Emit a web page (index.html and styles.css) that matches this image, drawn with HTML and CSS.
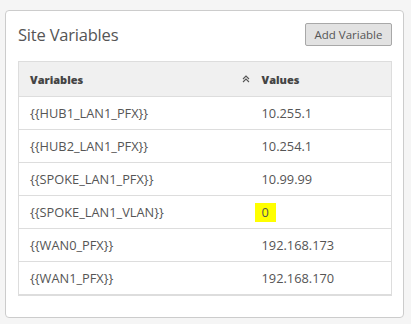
FILE: index.html
```html
<!DOCTYPE html>
<html lang="en">
  <head>
    <meta charset="UTF-8" />
    <title>Site Variables</title>
    <link rel="stylesheet" href="styles.css">
  </head>
  <body>
    <main class="card">
      <header class="card-head">
        <h2 class="card-title">Site Variables</h2>
        <button class="btn" type="button">Add Variable</button>
      </header>

      <table class="vars">
        <thead>
          <tr>
            <th class="col-name">
              <div class="th-inner">
                <span>Variables</span>
                <svg class="sort" width="8" height="8" viewBox="0 0 8 8">
                  <path d="M1 4 L4 1 L7 4 M1 7 L4 4 L7 7" fill="none" stroke="#555" stroke-width="1.1" />
                </svg>
              </div>
            </th>
            <th>Values</th>
          </tr>
        </thead>
        <tbody>
          <tr><td>{{HUB1_LAN1_PFX}}</td><td>10.255.1</td></tr>
          <tr><td>{{HUB2_LAN1_PFX}}</td><td>10.254.1</td></tr>
          <tr><td>{{SPOKE_LAN1_PFX}}</td><td>10.99.99</td></tr>
          <tr><td>{{SPOKE_LAN1_VLAN}}</td><td><span class="mark">0</span></td></tr>
          <tr><td>{{WAN0_PFX}}</td><td>192.168.173</td></tr>
          <tr><td>{{WAN1_PFX}}</td><td>192.168.170</td></tr>
        </tbody>
      </table>
    </main>
  </body>
</html>
```

FILE: styles.css
```css
body {
  margin: 0;
  padding: 10px 7px 0 5px;
  background: #f5f5f5;
  font-family: "Open Sans", "Noto Sans", sans-serif;
  color: #555;
}

.card {
  box-sizing: border-box;
  height: 308px;
  background: #fff;
  border: 1px solid #ccc;
  border-radius: 4px;
  padding: 12px 11px 12px 12px;
}

.card-head {
  display: flex;
  justify-content: space-between;
  align-items: center;
  height: 23px;
}

.card-title {
  margin: 0;
  font-size: 16.5px;
  font-weight: 400;
  color: #555;
  letter-spacing: -0.2px;
}

.btn {
  box-sizing: border-box;
  height: 23px;
  width: 87px;
  padding: 0;
  font-family: inherit;
  font-size: 11.5px;
  color: #555;
  background: #e2e2e2;
  border: 1px solid #a8a8a8;
  border-radius: 2px;
}

.vars {
  width: 100%;
  margin-top: 15px;
  border-collapse: collapse;
  border: 1px solid #ddd;
  border-bottom: 2px solid #ddd;
  font-size: 12.8px;
}

.vars th {
  height: 34px;
  padding: 0 0 0 11px;
  text-align: left;
  font-size: 11px;
  font-weight: 800;
  color: #444;
  background: #f0f0f0;
}

.vars th.col-name {
  box-sizing: border-box;
  width: 232px;
  padding-right: 1px;
}

.th-inner {
  display: flex;
  justify-content: space-between;
  align-items: center;
}

.vars td {
  height: 32px;
  padding: 0 0 0 11px;
  border-top: 1px solid #ddd;
  color: #555;
}

.mark {
  display: inline-block;
  height: 19px;
  line-height: 19px;
  padding: 0 7px;
  margin-left: -7px;
  background: #ffff00;
}
```
